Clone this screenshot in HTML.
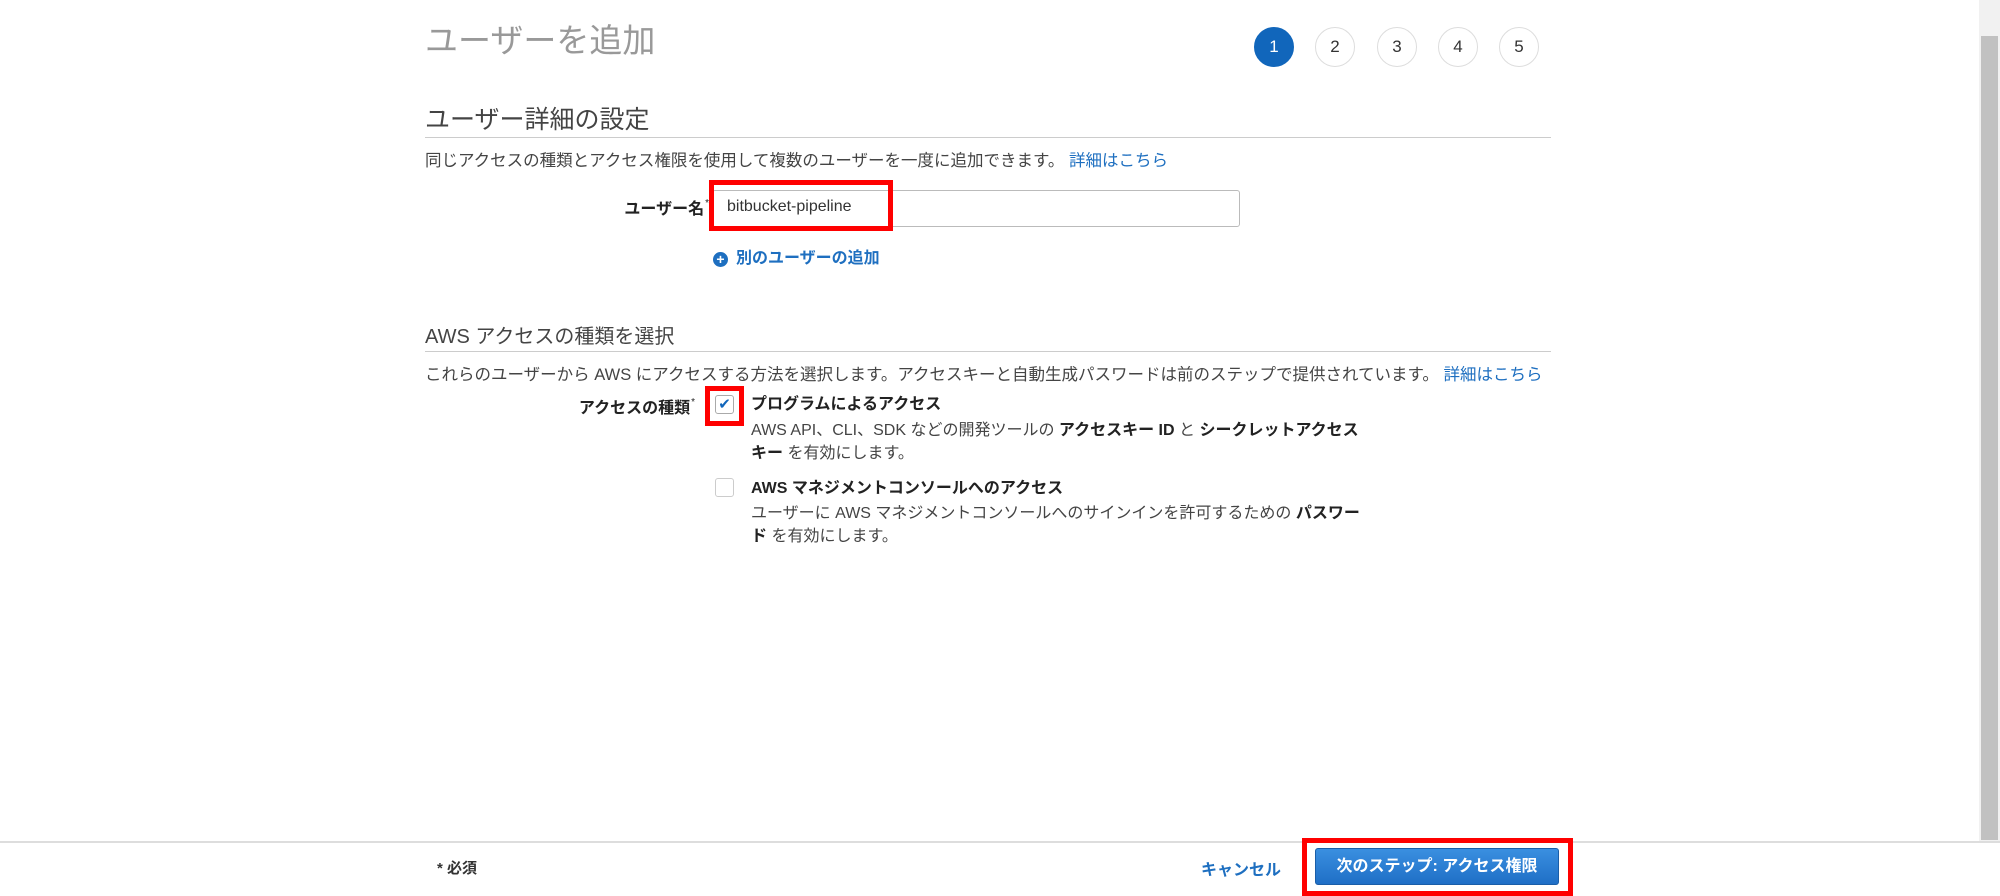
<!DOCTYPE html>
<html><head><meta charset="utf-8"><style>
*{margin:0;padding:0;box-sizing:border-box}
body{width:2000px;height:896px;background:#fff;position:relative;overflow:hidden;font-family:"Liberation Sans","Noto Sans CJK JP",sans-serif;color:#444}
.a{position:absolute;white-space:nowrap}
.c{position:absolute;width:40px;height:40px;border-radius:50%;border:1px solid #ddd;text-align:center;line-height:38px;font-size:17px;color:#333;background:#fff}
.hr{position:absolute;left:425px;width:1126px;height:1px;background:#ccc}
.rb{position:absolute;border:5px solid #f00}
b{color:#222}
sup{font-size:10px;font-weight:normal;position:relative;top:-2px;margin-left:1px}
</style></head><body>
<div class="a" style="left:425px;top:14px;font-size:33px;color:#999">ユーザーを追加</div>
<div class="c" style="left:1254px;top:27px;background:#1166bb;border-color:#1166bb;color:#fff">1</div>
<div class="c" style="left:1315px;top:27px">2</div>
<div class="c" style="left:1377px;top:27px">3</div>
<div class="c" style="left:1438px;top:27px">4</div>
<div class="c" style="left:1499px;top:27px">5</div>
<div class="a" style="left:425px;top:100px;font-size:25px;color:#444">ユーザー詳細の設定</div>
<div class="hr" style="top:137px"></div>
<div class="a" style="left:425px;top:147px;font-size:16.5px">同じアクセスの種類とアクセス権限を使用して複数のユーザーを一度に追加できます。 <span style="color:#1e6fc0">詳細はこちら</span></div>
<div class="a" style="right:1291px;top:195px;font-size:16px;font-weight:bold;color:#222">ユーザー名<sup>*</sup></div>
<div class="a" style="left:712px;top:190px;width:528px;height:37px;border:1px solid #bbb;border-radius:3px"></div>
<div class="a" style="left:727px;top:198px;font-size:16px;color:#333">bitbucket-pipeline</div>
<div class="rb" style="left:709px;top:180px;width:184px;height:51px"></div>
<div class="a" style="left:713px;top:244px;font-size:16px;font-weight:bold;color:#1e6fc0"><span style="display:inline-block;width:15px;height:15px;border-radius:50%;background:#1e6fc0;color:#fff;font-size:14px;line-height:15px;text-align:center;vertical-align:-1px;margin-right:8px">+</span>別のユーザーの追加</div>
<div class="a" style="left:425px;top:320px;font-size:20px;color:#444">AWS アクセスの種類を選択</div>
<div class="hr" style="top:351px"></div>
<div class="a" style="left:425px;top:361px;font-size:16.5px">これらのユーザーから AWS にアクセスする方法を選択します。アクセスキーと自動生成パスワードは前のステップで提供されています。 <span style="color:#1e6fc0">詳細はこちら</span></div>
<div class="a" style="right:1305px;top:394px;font-size:16px;font-weight:bold;color:#222">アクセスの種類<sup>*</sup></div>
<div class="a" style="left:715px;top:395px;width:19px;height:19px;border:1px solid #aaa;border-radius:3px;color:#1166bb;font-size:15px;line-height:17px;text-align:center">✔</div>
<div class="rb" style="left:705px;top:386px;width:39px;height:40px"></div>
<div class="a" style="left:751px;top:393px;font-size:16px;line-height:23px;white-space:normal;width:630px"><b>プログラムによるアクセス</b><br><span style="display:block;margin-top:3px">AWS API、CLI、SDK などの開発ツールの <b>アクセスキー ID</b> と <b>シークレットアクセス</b><br><b>キー</b> を有効にします。</span></div>
<div class="a" style="left:715px;top:478px;width:19px;height:19px;border:1px solid #ccc;border-radius:3px"></div>
<div class="a" style="left:751px;top:477px;font-size:16px;line-height:23px;white-space:normal;width:640px"><b>AWS マネジメントコンソールへのアクセス</b><br><span style="display:block;margin-top:2px">ユーザーに AWS マネジメントコンソールへのサインインを許可するための <b>パスワー</b><br><b>ド</b> を有効にします。</span></div>
<div class="a" style="left:1979px;top:0;width:21px;height:842px;background:#f1f1f1"></div>
<div class="a" style="left:1981px;top:36px;width:17px;height:804px;background:#c1c1c1"></div>
<div class="a" style="left:0;top:841px;width:2000px;height:2px;background:#ddd"></div>
<div class="a" style="left:437px;top:857px;font-size:15px;font-weight:bold;color:#333">* 必須</div>
<div class="a" style="left:1201px;top:856px;font-size:16px;font-weight:bold;color:#1e6fc0">キャンセル</div>
<div class="rb" style="left:1302px;top:838px;width:271px;height:58px"></div>
<div class="a" style="left:1315px;top:848px;width:244px;height:37px;background:linear-gradient(#3a8fe0,#1f6fc6);border:1px solid #1a5ea8;border-radius:3px;color:#fff;font-weight:bold;font-size:16px;text-align:center;line-height:35px">次のステップ: アクセス権限</div>
</body></html>
